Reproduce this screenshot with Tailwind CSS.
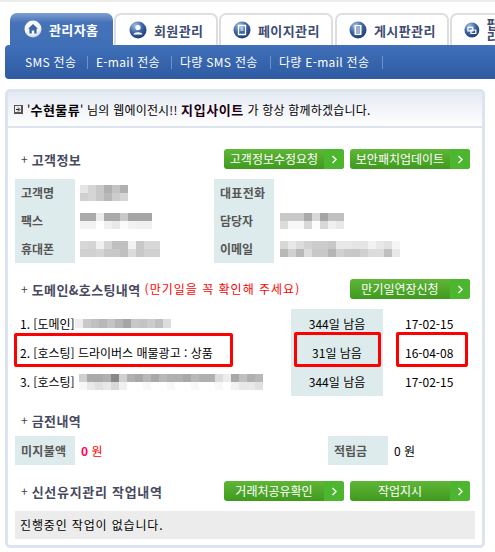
<!DOCTYPE html>
<html lang="ko">
<head>
<meta charset="utf-8">
<title>관리자홈</title>
<script src="https://cdn.jsdelivr.net/npm/@tailwindcss/browser@4"></script>
</head>
<body class="bg-white font-['Noto_Sans_CJK_KR','Liberation_Sans',sans-serif] text-[12px] leading-none text-black w-[495px] h-[552px] overflow-hidden">
<svg class="absolute w-0 h-0"><defs>
<radialGradient id="s" cx="35%" cy="25%" r="80%"><stop offset="0" stop-color="#a9c0e2"/><stop offset=".5" stop-color="#3f67a8"/><stop offset="1" stop-color="#1b3a75"/></radialGradient>
<radialGradient id="w" cx="40%" cy="25%" r="80%"><stop offset="0" stop-color="#ffffff"/><stop offset=".7" stop-color="#f2f5fa"/><stop offset="1" stop-color="#b9c9e2"/></radialGradient>
</defs></svg>

<div class="h-[2px] bg-[#ececec]"></div>

<!-- tabs -->
<div class="h-[11px]"></div>
<div class="flex h-[32px] pl-[10px] font-bold text-[13px] tracking-[0.4px] text-[#3d4c72] overflow-hidden">
  <div class="w-[103px] mr-[1px] shrink-0 rounded-t-[7px] bg-linear-to-b from-[#7f9fd0] via-[#4673b8] via-30% to-[#3f6fb6] text-white flex items-center pl-[14px] gap-[7px]">
    <svg width="18" height="18" viewBox="0 0 18 18"><circle cx="9" cy="9" r="8.5" fill="url(#w)"/><path d="M9 4 L14 8.8 L12.6 8.8 L12.6 13.5 L10.2 13.5 L10.2 10.5 L7.8 10.5 L7.8 13.5 L5.4 13.5 L5.4 8.8 L4 8.8 Z" fill="#3a66a8"/></svg>
    <span>관리자홈</span>
  </div>
  <div class="w-[104px] shrink-0 rounded-t-[7px] border-2 border-b-0 border-[#dedede] flex items-center pl-[13px] gap-[7px]">
    <svg width="18" height="18" viewBox="0 0 18 18"><circle cx="9" cy="9" r="8.5" fill="url(#s)"/><circle cx="9" cy="6.5" r="2.6" fill="#fff"/><path d="M4.5 13.6 C4.8 10.4 13.2 10.4 13.5 13.6 Z" fill="#fff"/></svg>
    <span>회원관리</span>
  </div>
  <div class="w-[114px] ml-[1px] shrink-0 rounded-t-[7px] border-2 border-b-0 border-[#dedede] flex items-center pl-[12px] gap-[7px]">
    <svg width="18" height="18" viewBox="0 0 18 18"><circle cx="9" cy="9" r="8.5" fill="url(#s)"/><path d="M5.5 4.5 H12.5 V13.5 H5.5 Z" fill="none" stroke="#fff" stroke-width="1.3"/><path d="M7.5 7 H10.5 M7.5 9 H10.5" stroke="#fff"/></svg>
    <span>페이지관리</span>
  </div>
  <div class="w-[114px] ml-[2px] shrink-0 rounded-t-[7px] border-2 border-b-0 border-[#dedede] flex items-center pl-[12px] gap-[7px]">
    <svg width="18" height="18" viewBox="0 0 18 18"><circle cx="9" cy="9" r="8.5" fill="url(#s)"/><path d="M5.5 4 H12.5 V14 H5.5 Z" fill="#fff"/><path d="M7 6 H11 M7 8 H11 M7 10 H11 M7 12 H11" stroke="#3a5d9a"/></svg>
    <span>게시판관리</span>
  </div>
  <div class="w-[80px] ml-[1px] shrink-0 rounded-tl-[7px] border-2 border-r-0 border-b-0 border-[#dedede] flex items-center pl-[12px] gap-[7px]">
    <svg width="18" height="18" viewBox="0 0 18 18"><circle cx="9" cy="9" r="8.5" fill="url(#s)"/><path d="M4.5 6 H10 V10 H4.5 Z M8 9 H13.5 V13 H8 Z" fill="none" stroke="#fff" stroke-width="1.4"/></svg>
    <span>팝업관리</span>
  </div>
</div>

<!-- sub nav -->
<div class="ml-[5px] h-[34px] rounded-l-[4px] bg-linear-to-b from-[#3f70b9] to-[#2f5ba2] text-white flex items-center tracking-[0.3px]">
  <span class="ml-[20px] w-[52px] whitespace-nowrap">SMS 전송</span>
  <i class="ml-[10px] w-px h-[13px] bg-[#6f93c9]"></i>
  <span class="ml-[8px] w-[66px] whitespace-nowrap">E-mail 전송</span>
  <i class="ml-[9px] w-px h-[13px] bg-[#6f93c9]"></i>
  <span class="ml-[8px] w-[82px] whitespace-nowrap">다량 SMS 전송</span>
  <i class="ml-[8px] w-px h-[13px] bg-[#6f93c9]"></i>
  <span class="ml-[8px] w-[94px] whitespace-nowrap">다량 E-mail 전송</span>
  <i class="ml-[9px] w-px h-[13px] bg-[#6f93c9]"></i>
</div>

<!-- panel -->
<div class="relative mt-[10px] ml-[5px] w-[480px] h-[459px] border-[3px] border-[#dce5ef] rounded-[5px]">
  <div class="h-[36px] border-b-2 border-[#dce5ef] bg-linear-to-b from-[#e4e9f2] to-white flex items-center pl-[6px]">
    <svg width="9" height="9" viewBox="0 0 9 9" class="mr-[4px]"><rect width="9" height="9" fill="#555"/><rect x="1" y="1" width="6" height="6" fill="#eee"/><path d="M2 4.5 H5 M4 2.5 L6 4.5 L4 6.5" stroke="#222" fill="none"/></svg>
    <span class="tracking-[0.2px] whitespace-nowrap">'<b class="text-[13px] tracking-[0.4px]">수현물류</b>' 님의 웹에이전시!! <b class="text-[13px] tracking-[0.6px] text-[#200010]">지입사이트</b> 가 항상 함께하겠습니다.</span>
  </div>

  <div class="pl-[7px] w-[467px]">
    <!-- 고객정보 -->
    <div class="mt-[21px] h-[20px] flex items-center">
      <span class="ml-[6px] mr-[4px] text-[#444]">+</span><b class="text-[13px] tracking-[0.4px] text-[#484a5e]">고객정보</b>
      <a class="ml-auto flex w-[120px] h-[20px] rounded-[3px] overflow-hidden bg-linear-to-b from-[#5fb637] to-[#3f9a1e] text-white">
        <span class="flex-1 flex items-center justify-center whitespace-nowrap">고객정보수정요청</span>
        <span class="w-[20px] bg-[#4cb72e] flex items-center justify-center"><svg width="7" height="9" viewBox="0 0 7 9"><path d="M1.5 1 L5 4.5 L1.5 8" fill="none" stroke="#fff" stroke-width="1.4"/></svg></span>
      </a>
      <a class="ml-[6px] mr-[5px] flex w-[120px] h-[20px] rounded-[3px] overflow-hidden bg-linear-to-b from-[#5fb637] to-[#3f9a1e] text-white">
        <span class="flex-1 flex items-center justify-center whitespace-nowrap">보안패치업데이트</span>
        <span class="w-[20px] bg-[#4cb72e] flex items-center justify-center"><svg width="7" height="9" viewBox="0 0 7 9"><path d="M1.5 1 L5 4.5 L1.5 8" fill="none" stroke="#fff" stroke-width="1.4"/></svg></span>
      </a>
    </div>

    <div class="mt-[10px] grid grid-cols-[60px_139px_60px_1fr] auto-rows-[28px] items-center">
      <div class="bg-[#deebec] h-full flex items-center pl-[6px] font-bold text-[#555]">고객명</div>
      <div class="pl-[5px]"><div class="grid grid-cols-[repeat(6,8px)] auto-rows-[8px]">
        <i class="bg-[#e5e5e5]"></i><i class="bg-[#d5d5d5]"></i><i class="bg-[#c8c8c8]"></i><i class="bg-[#b0b0b0]"></i><i class="bg-[#c4c4c4]"></i><i class="bg-[#b0b0b0]"></i>
        <i class="bg-[#d0d0d0]"></i><i class="bg-[#d5d5d5]"></i><i class="bg-[#c8c8c8]"></i><i class="bg-[#b8b8b8]"></i><i class="bg-[#cccccc]"></i><i class="bg-[#d5d5d5]"></i>
      </div></div>
      <div class="bg-[#deebec] h-full flex items-center pl-[6px] font-bold text-[#555] tracking-[0.3px]">대표전화</div>
      <div></div>

      <div class="bg-[#deebec] h-full flex items-center pl-[6px] font-bold text-[#555]">팩스</div>
      <div class="pl-[5px]"><div class="grid grid-cols-[repeat(9,8px)] auto-rows-[8px]">
        <i class="bg-[#aaaaaa]"></i><i class="bg-[#aaaaaa]"></i><i class="bg-[#ebebeb]"></i><i class="bg-[#aaaaaa]"></i><i class="bg-[#aaaaaa]"></i><i class="bg-[#c8c8c8]"></i><i class="bg-[#a5a5a5]"></i><i class="bg-[#a5a5a5]"></i><i class="bg-[#a5a5a5]"></i>
        <i class="bg-[#f2f2f2]"></i><i class="bg-[#f2f2f2]"></i><i class="bg-white"></i><i class="bg-[#f0f0f0]"></i><i class="bg-[#e8e8e8]"></i><i class="bg-[#fafafa]"></i><i class="bg-[#f2f2f2]"></i><i class="bg-[#f0f0f0]"></i><i class="bg-[#f0f0f0]"></i>
      </div></div>
      <div class="bg-[#deebec] h-full flex items-center pl-[6px] font-bold text-[#555]">담당자</div>
      <div class="pl-[6px]"><div class="grid grid-cols-[repeat(8,8px)] auto-rows-[8px]">
        <i class="bg-[#c8c8c8]"></i><i class="bg-[#c8c8c8]"></i><i class="bg-[#c8c8c8]"></i><i class="bg-[#aaaaaa]"></i><i class="bg-[#d8d8d8]"></i><i class="bg-[#a5a5a5]"></i><i class="bg-[#c0c0c0]"></i><i class="bg-[#c0c0c0]"></i>
        <i class="bg-[#dcdcdc]"></i><i class="bg-[#f8f8f8]"></i><i class="bg-[#f8f8f8]"></i><i class="bg-[#d8d8d8]"></i><i class="bg-[#fcfcfc]"></i><i class="bg-[#d8d8d8]"></i><i class="bg-[#f0f0f0]"></i><i class="bg-[#e8e8e8]"></i>
      </div></div>

      <div class="bg-[#deebec] h-full flex items-center pl-[6px] font-bold text-[#555]">휴대폰</div>
      <div class="pl-[5px]"><div class="grid grid-cols-[repeat(10,8px)] auto-rows-[8px]">
        <i class="bg-[#d8d8d8]"></i><i class="bg-[#d5d5d5]"></i><i class="bg-[#f0f0f0]"></i><i class="bg-[#d5d5d5]"></i><i class="bg-[#c0c0c0]"></i><i class="bg-[#c0c0c0]"></i><i class="bg-[#f2f2f2]"></i><i class="bg-[#c8c8c8]"></i><i class="bg-[#d8d8d8]"></i><i class="bg-[#d8d8d8]"></i>
        <i class="bg-[#d0d0d0]"></i><i class="bg-[#d0d0d0]"></i><i class="bg-[#d5d5d5]"></i><i class="bg-[#c8c8c8]"></i><i class="bg-[#c8c8c8]"></i><i class="bg-[#c0c0c0]"></i><i class="bg-[#dcdcdc]"></i><i class="bg-[#c8c8c8]"></i><i class="bg-[#d0d0d0]"></i><i class="bg-[#d0d0d0]"></i>
      </div></div>
      <div class="bg-[#deebec] h-full flex items-center pl-[6px] font-bold text-[#555]">이메일</div>
      <div class="pl-[6px]"><div class="grid grid-cols-[repeat(15,8px)] auto-rows-[8px]">
        <i class="bg-[#d8d8d8]"></i><i class="bg-[#e8e8e8]"></i><i class="bg-[#dcdcdc]"></i><i class="bg-[#d2d2d2]"></i><i class="bg-[#cccccc]"></i><i class="bg-[#cccccc]"></i><i class="bg-[#c8c8c8]"></i><i class="bg-[#e8e8e8]"></i><i class="bg-[#e8e8e8]"></i><i class="bg-[#e5e5e5]"></i><i class="bg-[#e5e5e5]"></i><i class="bg-[#f2f2f2]"></i><i class="bg-[#e8e8e8]"></i><i class="bg-[#e2e2e2]"></i><i class="bg-[#f5f5f5]"></i>
        <i class="bg-[#b8b8b8]"></i><i class="bg-[#d0d0d0]"></i><i class="bg-[#b8b8b8]"></i><i class="bg-[#dcdcdc]"></i><i class="bg-[#c8c8c8]"></i><i class="bg-[#c8c8c8]"></i><i class="bg-[#b5b5b5]"></i><i class="bg-[#d0d0d0]"></i><i class="bg-[#c8c8c8]"></i><i class="bg-[#c8c8c8]"></i><i class="bg-[#d0d0d0]"></i><i class="bg-[#dcdcdc]"></i><i class="bg-[#dcdcdc]"></i><i class="bg-[#c0c0c0]"></i><i class="bg-[#e8e8e8]"></i>
      </div></div>
    </div>

    <!-- 도메인 -->
    <div class="mt-[16px] h-[20px] flex items-center">
      <span class="ml-[6px] mr-[4px] text-[#444]">+</span><b class="text-[13px] tracking-[0.4px] text-[#484a5e]">도메인&amp;호스팅내역</b>
      <span class="ml-[4px] text-[#ff0000] tracking-[1px] whitespace-nowrap">(만기일을 꼭 확인해 주세요)</span>
      <a class="ml-auto mr-[5px] flex w-[120px] h-[20px] rounded-[3px] overflow-hidden bg-linear-to-b from-[#5fb637] to-[#3f9a1e] text-white">
        <span class="flex-1 flex items-center justify-center whitespace-nowrap">만기일연장신청</span>
        <span class="w-[20px] bg-[#4cb72e] flex items-center justify-center"><svg width="7" height="9" viewBox="0 0 7 9"><path d="M1.5 1 L5 4.5 L1.5 8" fill="none" stroke="#fff" stroke-width="1.4"/></svg></span>
      </a>
    </div>

    <div class="mt-[10px] grid grid-cols-[276px_92px_1fr] grid-rows-[29px_29px_29px] items-center">
      <div class="pl-[5px] flex items-center">1. [도메인]<div class="grid grid-cols-[repeat(13,8px)] auto-rows-[9px]">
        <i class="bg-[#eeeeee]"></i><i class="bg-[#c8c8c8]"></i><i class="bg-[#c0c0c0]"></i><i class="bg-[#b8b8b8]"></i><i class="bg-[#c4c4c4]"></i><i class="bg-[#b5b5b5]"></i><i class="bg-[#a5a5a5]"></i><i class="bg-[#c8c8c8]"></i><i class="bg-[#c4c4c4]"></i><i class="bg-[#cccccc]"></i><i class="bg-[#c0c0c0]"></i><i class="bg-[#dcdcdc]"></i><i class="bg-white"></i>
      </div></div>
      <div class="bg-[#deebec] h-full flex items-center justify-center">344일 남음</div>
      <div class="pl-[22px]">17-02-15</div>

      <div class="pl-[5px]">2. [호스팅] 드라이버스 매물광고 : 상품</div>
      <div class="bg-[#deebec] h-full flex items-center justify-center">31일 남음</div>
      <div class="pl-[22px]">16-04-08</div>

      <div class="pl-[5px] flex items-center">3. [호스팅]<div class="ml-[4px] grid grid-cols-[repeat(23,8px)] auto-rows-[8px]">
        <i class="bg-[#d0d0d0]"></i><i class="bg-[#aaaaaa]"></i><i class="bg-[#aaaaaa]"></i><i class="bg-[#b0b0b0]"></i><i class="bg-[#888888]"></i><i class="bg-[#d0d0d0]"></i><i class="bg-[#b0b0b0]"></i><i class="bg-[#a8a8a8]"></i><i class="bg-[#b8b8b8]"></i><i class="bg-[#a8a8a8]"></i><i class="bg-[#b8b8b8]"></i><i class="bg-[#b0b0b0]"></i><i class="bg-[#b0b0b0]"></i><i class="bg-[#a8a8a8]"></i><i class="bg-[#b8b8b8]"></i><i class="bg-[#b0b0b0]"></i><i class="bg-[#b0b0b0]"></i><i class="bg-[#dcdcdc]"></i><i class="bg-[#ececec]"></i><i class="bg-[#a8a8a8]"></i><i class="bg-[#c0c0c0]"></i><i class="bg-[#b0b0b0]"></i><i class="bg-[#b8b8b8]"></i>
        <i class="bg-[#f8f8f8]"></i><i class="bg-[#e8e8e8]"></i><i class="bg-[#e0e0e0]"></i><i class="bg-[#e8e8e8]"></i><i class="bg-[#d8d8d8]"></i><i class="bg-[#f0f0f0]"></i><i class="bg-white"></i><i class="bg-white"></i><i class="bg-[#f8f8f8]"></i><i class="bg-white"></i><i class="bg-white"></i><i class="bg-[#f8f8f8]"></i><i class="bg-white"></i><i class="bg-white"></i><i class="bg-[#f8f8f8]"></i><i class="bg-white"></i><i class="bg-white"></i><i class="bg-[#f8f8f8]"></i><i class="bg-white"></i><i class="bg-[#f2f2f2]"></i><i class="bg-[#e8e8e8]"></i><i class="bg-[#e8e8e8]"></i><i class="bg-[#e0e0e0]"></i>
      </div></div>
      <div class="bg-[#deebec] h-full flex items-center justify-center">344일 남음</div>
      <div class="pl-[22px]">17-02-15</div>
    </div>

    <!-- 금전내역 -->
    <div class="mt-[14px] h-[20px] flex items-center">
      <span class="ml-[6px] mr-[4px] text-[#444]">+</span><b class="text-[13px] tracking-[0.4px] text-[#484a5e]">금전내역</b>
    </div>
    <div class="mt-[6px] h-[29px] grid grid-cols-[60px_253px_60px_1fr] items-center">
      <div class="h-full bg-[#deebec] flex items-center pl-[6px] font-bold text-[#555] tracking-[0.3px]">미지불액</div>
      <div class="pl-[6px] text-[#ff0000]"><b class="text-[#ff0055]">0</b> 원</div>
      <div class="h-full bg-[#deebec] flex items-center pl-[6px] font-bold text-[#555]">적립금</div>
      <div class="pl-[6px]">0 원</div>
    </div>

    <!-- 작업내역 -->
    <div class="mt-[16px] h-[20px] flex items-center">
      <span class="ml-[6px] mr-[4px] text-[#444]">+</span><b class="text-[13px] tracking-[0.7px] text-[#484a5e]">신선유지관리 작업내역</b>
      <a class="ml-auto flex w-[120px] h-[20px] rounded-[3px] overflow-hidden bg-linear-to-b from-[#5fb637] to-[#3f9a1e] text-white">
        <span class="flex-1 flex items-center justify-center whitespace-nowrap">거래처공유확인</span>
        <span class="w-[20px] bg-[#4cb72e] flex items-center justify-center"><svg width="7" height="9" viewBox="0 0 7 9"><path d="M1.5 1 L5 4.5 L1.5 8" fill="none" stroke="#fff" stroke-width="1.4"/></svg></span>
      </a>
      <a class="ml-[6px] mr-[5px] flex w-[120px] h-[20px] rounded-[3px] overflow-hidden bg-linear-to-b from-[#5fb637] to-[#3f9a1e] text-white">
        <span class="flex-1 flex items-center justify-center whitespace-nowrap">작업지시</span>
        <span class="w-[20px] bg-[#4cb72e] flex items-center justify-center"><svg width="7" height="9" viewBox="0 0 7 9"><path d="M1.5 1 L5 4.5 L1.5 8" fill="none" stroke="#fff" stroke-width="1.4"/></svg></span>
      </a>
    </div>
    <div class="mt-[10px] h-[28px] w-[460px] bg-[#ececec] flex items-center pl-[5px] tracking-[0.85px]">진행중인 작업이 없습니다.</div>
  </div>

  <!-- red highlight marks drawn over the table -->
  <div class="absolute left-[6px] top-[241px] w-[219px] h-[34px] border-[3px] border-[#ff0000] rounded-[2px]"></div>
  <div class="absolute left-[286px] top-[240px] w-[87px] h-[35px] border-[3px] border-[#ff0000] rounded-[2px]"></div>
  <div class="absolute left-[388px] top-[240px] w-[72px] h-[35px] border-[3px] border-[#ff0000] rounded-[2px]"></div>
</div>
</body>
</html>
